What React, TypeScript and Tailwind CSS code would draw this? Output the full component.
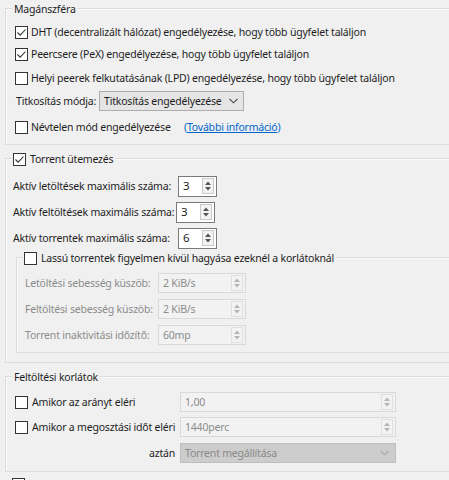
import type { ReactNode } from 'react'

const TEXT = 'text-[#1e1e1e]'
const DIM = 'text-[#8c8c8c]'

function Check({ checked = false }: { checked?: boolean }) {
  return (
    <span className="w-[13px] h-[13px] shrink-0 border border-[#333333] bg-white flex items-center justify-center">
      {checked && (
        <svg width="11" height="11" viewBox="0 0 11 11">
          <path d="M1.5 5.5 L4.2 8.2 L9.5 2.5" fill="none" stroke="#333" strokeWidth="1.1" />
        </svg>
      )}
    </span>
  )
}

function Arrows({ dim = false }: { dim?: boolean }) {
  const c = dim ? '#b5b5b5' : '#555555'
  return (
    <span className={`w-[12px] h-[16px] shrink-0 border ${dim ? 'border-[#e0e0e0]' : 'border-[#c8c8c8]'} bg-[#f3f3f3] flex flex-col items-center justify-center gap-[2px]`}>
      <svg width="6" height="4" viewBox="0 0 6 4"><path d="M0 4 L3 0.5 L6 4 Z" fill={c} /></svg>
      <svg width="6" height="4" viewBox="0 0 6 4"><path d="M0 0 L3 3.5 L6 0 Z" fill={c} /></svg>
    </span>
  )
}

function Spin({ value }: { value: string }) {
  return (
    <div className="w-[39px] h-[21px] shrink-0 border border-[#7a7a7a] bg-white flex items-center justify-between pl-[4px] pr-[2px]">
      <span className={`text-[11.5px] ${TEXT}`}>{value}</span>
      <Arrows />
    </div>
  )
}

function DimSpin({ value, w }: { value: string; w: string }) {
  return (
    <div className={`${w} h-[20px] shrink-0 border border-[#d9d9d9] bg-[#f2f2f2] flex items-center justify-between pl-[4px] pr-[2px]`}>
      <span className={DIM}>{value}</span>
      <Arrows dim />
    </div>
  )
}

function Chevron({ color }: { color: string }) {
  return (
    <svg width="9" height="6" viewBox="0 0 9 6">
      <path d="M0.5 0.8 L4.5 4.8 L8.5 0.8" fill="none" stroke={color} strokeWidth="1.1" />
    </svg>
  )
}

function Group({ title, className, children }: { title: ReactNode; className: string; children: ReactNode }) {
  return (
    <div className={`relative border border-[#dcdcdc] shadow-[inset_1px_1px_0_#fafafa] ${className}`}>
      <div className="absolute top-[-8px] left-[6px] px-[1px] bg-[#f0f0f0] h-[16px] flex items-center gap-[4px]">
        {title}
      </div>
      {children}
    </div>
  )
}

export default function App() {
  return (
    <div className={`w-[449px] h-[480px] overflow-hidden bg-[#f0f0f0] text-[10.5px] tracking-[-0.2px] leading-[16px] whitespace-nowrap ${TEXT} font-['Noto_Sans',sans-serif]`}>
      {/* Magánszféra */}
      <Group title={<span className="pl-[1px]">Magánszféra</span>} className="ml-[5px] mt-[8px] w-[470px] h-[137px]">
        <div className="flex flex-col pl-[9px] pt-[13px]">
          <div className="h-[20px] flex items-center gap-[3px]">
            <Check checked />
            <span>DHT (decentralizált hálózat) engedélyezése, hogy több ügyfelet találjon</span>
          </div>
          <div className="h-[20px] mt-[2px] flex items-center gap-[3px]">
            <Check checked />
            <span>Peercsere (PeX) engedélyezése, hogy több ügyfelet találjon</span>
          </div>
          <div className="h-[20px] mt-[4px] flex items-center gap-[3px]">
            <Check />
            <span>Helyi peerek felkutatásának (LPD) engedélyezése, hogy több ügyfelet találjon</span>
          </div>
          <div className="h-[20px] mt-[3px] flex items-center">
            <span className="w-[84px] shrink-0 pl-[1px]">Titkosítás módja:</span>
            <div className="w-[145px] h-[20px] border border-[#adadad] bg-[#e5e5e5] flex items-center justify-between pl-[4px] pr-[5px]">
              <span>Titkosítás engedélyezése</span>
              <Chevron color="#444" />
            </div>
          </div>
          <div className="h-[20px] mt-[6px] flex items-center gap-[3px]">
            <Check />
            <span className="w-[150px] shrink-0">Névtelen mód engedélyezése</span>
            <span className="text-[#0066cc]">
              (<span className="underline">További információ</span>)
            </span>
          </div>
        </div>
      </Group>

      {/* Torrent ütemezés */}
      <Group
        title={<><Check checked /><span className="pr-[1px]">Torrent ütemezés</span></>}
        className="ml-[5px] mt-[13px] w-[470px] h-[205px]"
      >
        <div className="flex flex-col gap-[4px] pl-[7px] pt-[16px]">
          <div className="h-[22px] flex items-center">
            <span className="w-[165px] shrink-0">Aktív letöltések maximális száma:</span>
            <Spin value="3" />
          </div>
          <div className="h-[22px] flex items-center">
            <span className="w-[163px] shrink-0">Aktív feltöltések maximális száma:</span>
            <Spin value="3" />
          </div>
          <div className="h-[22px] flex items-center">
            <span className="w-[165px] shrink-0">Aktív torrentek maximális száma:</span>
            <Spin value="6" />
          </div>
        </div>

        <Group
          title={<><Check /><span className="pr-[1px]">Lassú torrentek figyelmen kívül hagyása ezeknél a korlátoknál</span></>}
          className="ml-[10px] mt-[8px] w-[460px] h-[96px]"
        >
          <div className={`flex flex-col gap-[6px] pl-[8px] pt-[15px] ${DIM}`}>
            <div className="h-[20px] flex items-center">
              <span className="w-[133px] shrink-0">Letöltési sebesség küszöb:</span>
              <DimSpin value="2 KiB/s" w="w-[88px]" />
            </div>
            <div className="h-[20px] flex items-center">
              <span className="w-[133px] shrink-0">Feltöltési sebesség küszöb:</span>
              <DimSpin value="2 KiB/s" w="w-[88px]" />
            </div>
            <div className="h-[20px] flex items-center">
              <span className="w-[133px] shrink-0">Torrent inaktivitási időzítő:</span>
              <DimSpin value="60mp" w="w-[88px]" />
            </div>
          </div>
        </Group>
      </Group>

      {/* Feltöltési korlátok */}
      <Group title={<span className="pl-[1px]">Feltöltési korlátok</span>} className="ml-[5px] mt-[13px] w-[470px] h-[96px]">
        <div className="flex flex-col pl-[9px] pt-[15px]">
          <div className="h-[20px] flex items-center">
            <div className="w-[165px] shrink-0 flex items-center gap-[4px]">
              <Check />
              <span>Amikor az arányt eléri</span>
            </div>
            <DimSpin value="1,00" w="w-[216px]" />
          </div>
          <div className="h-[20px] mt-[5px] flex items-center">
            <div className="w-[165px] shrink-0 flex items-center gap-[4px]">
              <Check />
              <span>Amikor a megosztási időt eléri</span>
            </div>
            <DimSpin value="1440perc" w="w-[216px]" />
          </div>
          <div className="h-[20px] mt-[6px] flex items-center">
            <span className="w-[165px] shrink-0 text-right pr-[5px]">aztán</span>
            <div className="w-[216px] h-[20px] border border-[#bfbfbf] bg-[#cccccc] flex items-center justify-between pl-[4px] pr-[6px]">
              <span className="text-[#8a8a8a]">Torrent megállítása</span>
              <Chevron color="#a8a8a8" />
            </div>
          </div>
        </div>
      </Group>

      <div className="ml-[12px] mt-[6px] flex items-center">
        <Check />
      </div>
    </div>
  )
}
